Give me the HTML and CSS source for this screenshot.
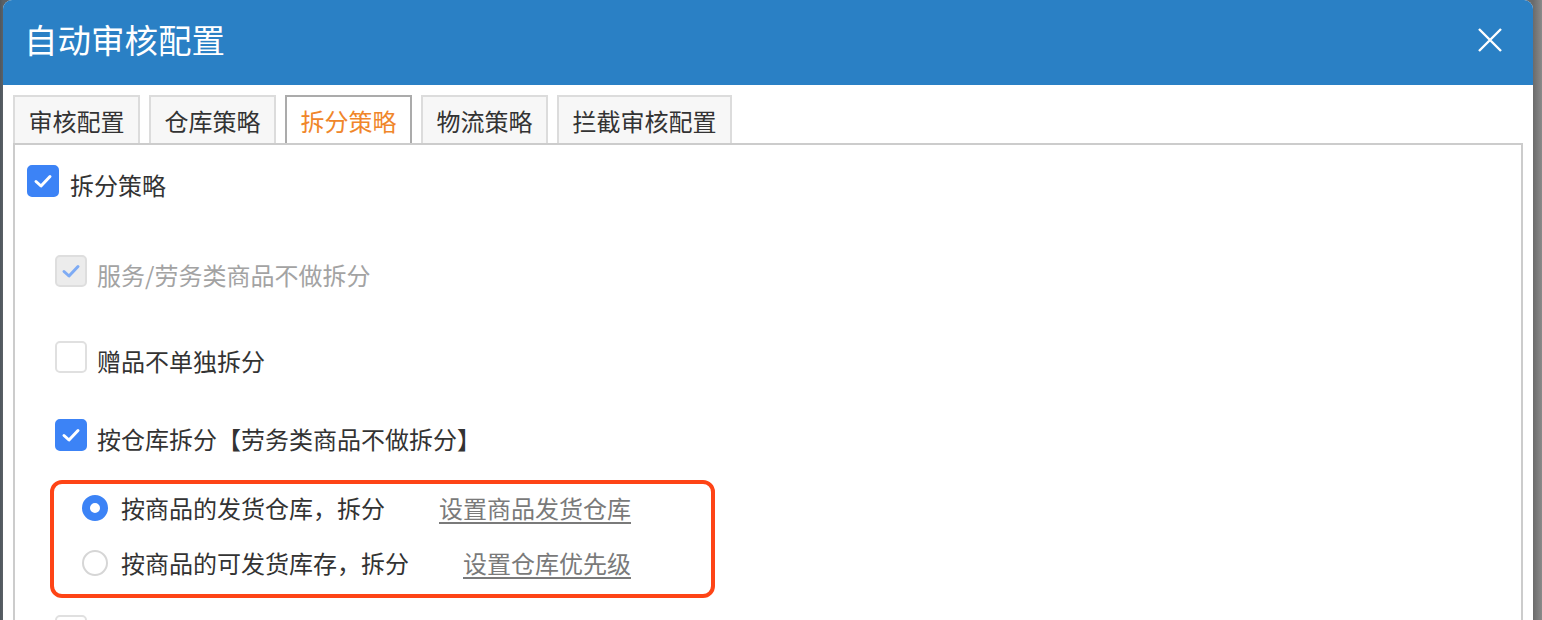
FILE: index.html
```html
<!DOCTYPE html>
<html lang="zh-CN">
<head>
    <meta charset="UTF-8">
    <meta name="viewport" content="width=device-width, initial-scale=1.0">
    <title>自动审核配置</title>
    <link rel="stylesheet" href="styles.css">
</head>
<body>
    <div class="dialog">
        <header class="dialog-head">
            <span class="dialog-title">自动审核配置</span>
            <button class="close-btn" aria-label="关闭">
                <svg width="24" height="24" viewBox="0 0 24 24">
                    <path d="M1 1 L23 23 M23 1 L1 23" stroke="#fff" stroke-width="2.4" fill="none"/>
                </svg>
            </button>
        </header>

        <div class="dialog-body">
            <ul class="tabs">
                <li class="tab">审核配置</li>
                <li class="tab">仓库策略</li>
                <li class="tab active">拆分策略</li>
                <li class="tab">物流策略</li>
                <li class="tab">拦截审核配置</li>
            </ul>

            <div class="panel">
                <label class="check-row top">
                    <span class="box checked">
                        <svg width="22" height="22" viewBox="0 0 22 22"><path d="M4 11.5 L9 16 L18 6.5" stroke="#fff" stroke-width="3" fill="none" stroke-linecap="round" stroke-linejoin="round"/></svg>
                    </span>
                    <span class="label-text">拆分策略</span>
                </label>

                <label class="check-row sub row-service disabled">
                    <span class="box disabled-checked">
                        <svg width="22" height="22" viewBox="0 0 22 22"><path d="M4 11.5 L9 16 L18 6.5" stroke="#7eabf4" stroke-width="3" fill="none" stroke-linecap="round" stroke-linejoin="round"/></svg>
                    </span>
                    <span class="label-text">服务/劳务类商品不做拆分</span>
                </label>

                <label class="check-row sub row-gift">
                    <span class="box"></span>
                    <span class="label-text">赠品不单独拆分</span>
                </label>

                <label class="check-row sub row-store">
                    <span class="box checked">
                        <svg width="22" height="22" viewBox="0 0 22 22"><path d="M4 11.5 L9 16 L18 6.5" stroke="#fff" stroke-width="3" fill="none" stroke-linecap="round" stroke-linejoin="round"/></svg>
                    </span>
                    <span class="label-text">按仓库拆分【劳务类商品不做拆分】</span>
                </label>

                <div class="highlight">
                    <div class="radio-row">
                        <span class="radio on"></span>
                        <span class="radio-text">按商品的发货仓库，拆分</span>
                        <a class="link" href="#">设置商品发货仓库</a>
                    </div>
                    <div class="radio-row second">
                        <span class="radio"></span>
                        <span class="radio-text">按商品的可发货库存，拆分</span>
                        <a class="link" href="#">设置仓库优先级</a>
                    </div>
                </div>

                <label class="check-row sub row-next">
                    <span class="box"></span>
                </label>
            </div>
        </div>
    </div>
</body>
</html>
```

FILE: styles.css
```css
html, body {
    margin: 0;
    padding: 0;
    height: 620px;
    overflow: hidden;
}

body {
    font-family: "Noto Sans CJK SC", "Noto Sans", sans-serif;
    background: linear-gradient(90deg, #4f575e 0, #5b6166 3px, #6b6b6b 1533px, #8a8a8a 1542px);
    padding-left: 3px;
    width: 1530px;
}

.dialog {
    background-color: #fff;
    border-radius: 9px 9px 0 0;
    height: 640px;
    overflow: hidden;
}

.dialog-head {
    background-color: #2a80c5;
    height: 85px;
    display: flex;
    align-items: center;
    justify-content: space-between;
    padding: 0 31px 0 21px;
}

.dialog-title {
    color: #fff;
    font-size: 33.5px;
    line-height: 40px;
    margin-top: -7px;
}

.close-btn {
    background: none;
    border: none;
    padding: 0;
    width: 24px;
    height: 24px;
    margin-top: -6px;
    cursor: pointer;
}

.dialog-body {
    padding: 10px 10px 0 10px;
}

/* tabs */
.tabs {
    list-style: none;
    margin: 0;
    padding: 0;
    display: flex;
    gap: 9px;
}

.tab {
    height: 46px;
    line-height: 47px;
    padding: 0 13.5px;
    font-size: 24px;
    color: #333;
    background-color: #f7f7f7;
    border: 2px solid #dcdcdc;
    border-bottom: none;
}

.tab.active {
    background-color: #fff;
    border-color: #ababab;
    color: #f0862a;
}

.panel {
    border: 2px solid #cccccc;
    height: 600px;
    padding: 20px 12px 0 12px;
    box-sizing: border-box;
}

/* checkbox rows */
.check-row {
    display: flex;
    align-items: center;
    gap: 11px;
    font-size: 24px;
    line-height: 32px;
    color: #333;
}

.label-text {
    padding-top: 4px;
    margin-bottom: -4px;
}

.check-row.sub {
    margin-left: 28px;
    gap: 10px;
}

.row-service { margin-top: 58px; }
.row-gift { margin-top: 54px; }
.row-store { margin-top: 46px; }
.row-next { margin-top: 17px; }

.check-row.disabled {
    color: #a3a3a3;
}

.box {
    width: 32px;
    height: 32px;
    box-sizing: border-box;
    border: 2px solid #e0e0e0;
    border-radius: 5px;
    background-color: #fff;
    display: flex;
    align-items: center;
    justify-content: center;
    flex-shrink: 0;
}

.box.checked {
    background-color: #3c83f6;
    border-color: #3c83f6;
}

.box.disabled-checked {
    background-color: #ececec;
    border-color: #dedede;
}

/* red highlighted radio group */
.highlight {
    margin: 29px 0 0 23px;
    width: 665px;
    height: 118px;
    box-sizing: border-box;
    border: 4px solid #fe4416;
    border-radius: 12px;
    padding: 11px 0 0 28px;
}

.radio-row {
    display: flex;
    align-items: center;
    height: 26px;
    font-size: 24px;
    color: #333;
}

.radio-row.second {
    margin-top: 29px;
}

.radio {
    width: 26px;
    height: 26px;
    box-sizing: border-box;
    border-radius: 50%;
    border: 2px solid #d6d6d6;
    background-color: #fff;
    margin-right: 13px;
    flex-shrink: 0;
}

.radio.on {
    border: 8px solid #3c83f6;
}

.radio-text {
    line-height: 26px;
}

.link {
    margin-left: 54px;
    color: #7a7a7a;
    text-decoration: underline;
    text-underline-offset: 4px;
    line-height: 26px;
}
```
